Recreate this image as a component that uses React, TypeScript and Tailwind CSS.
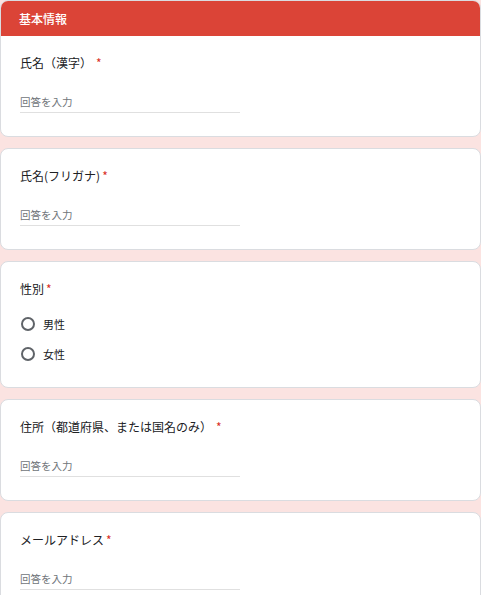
import React from 'react';

const font = { fontFamily: '"Noto Sans CJK JP", "Noto Sans", sans-serif' };

function Label({ text, gap = false }: { text: string; gap?: boolean }) {
  return (
    <div className="h-[18px] text-[12px] leading-[18px] text-[#202124]">
      {text}
      <span className={`text-[#d93025] ${gap ? 'ml-[4px]' : 'ml-[2px]'}`}>*</span>
    </div>
  );
}

function TextQuestion({ label, gap }: { label: string; gap?: boolean }) {
  return (
    <div className="pt-[18px] px-[19px] pb-[23px]">
      <Label text={label} gap={gap} />
      <div className="mt-[22px] w-[220px] pb-[2px] border-b border-[#e0e0e0]">
        <div className="h-[16px] text-[10.5px] leading-[16px] text-[#70757a]">回答を入力</div>
      </div>
    </div>
  );
}

function Card({ children }: { children: React.ReactNode }) {
  return (
    <div className="bg-white border border-[#dadce0] rounded-[8px] overflow-hidden">{children}</div>
  );
}

function Radio({ label }: { label: string }) {
  return (
    <div className="h-[30px] flex items-center">
      <span className="w-[14px] h-[14px] rounded-full border-2 border-[#5f6368] ml-[1px]" />
      <span className="ml-[8px] text-[11px] text-[#202124]">{label}</span>
    </div>
  );
}

export default function App() {
  return (
    <div style={font} className="min-h-screen bg-[#fbe3e1] flex flex-col gap-[11px]">
      <Card>
        <div className="h-[35px] bg-[#db4437] flex items-center pl-[18px]">
          <span className="text-white text-[12px] font-medium">基本情報</span>
        </div>
        <TextQuestion label="氏名（漢字）" gap />
      </Card>
      <Card>
        <TextQuestion label="氏名(フリガナ)" />
      </Card>
      <Card>
        <div className="pt-[18px] px-[19px] pb-[18px]">
          <Label text="性別" />
          <div className="mt-[11px]">
            <Radio label="男性" />
            <Radio label="女性" />
          </div>
        </div>
      </Card>
      <Card>
        <TextQuestion label="住所（都道府県、または国名のみ）" gap />
      </Card>
      <Card>
        <TextQuestion label="メールアドレス" />
      </Card>
    </div>
  );
}
